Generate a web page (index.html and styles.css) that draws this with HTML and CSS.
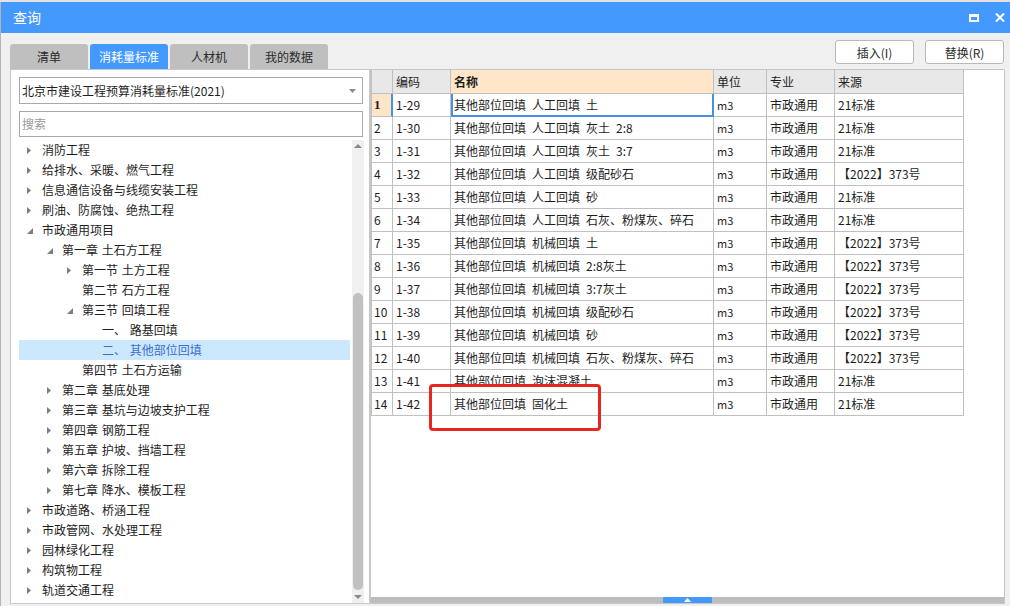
FILE: index.html
```html
<!DOCTYPE html>
<html lang="zh">
<head>
<meta charset="utf-8">
<title>查询</title>
<link rel="stylesheet" href="styles.css">
</head>
<body>
<div class="topstrip"></div>
<div class="window">
  <div class="titlebar">
    <span class="title">查询</span>
    <div class="winbtns">
      <svg class="ico" width="10" height="8" viewBox="0 0 10 8"><path d="M0 0H10V8H0Z M2 3H8V6H2Z" fill="#fff" fill-rule="evenodd"/></svg>
      <svg class="ico" width="10" height="9" viewBox="0 0 10 9"><path d="M1 0.5L9 8.5M9 0.5L1 8.5" stroke="#fff" stroke-width="2"/></svg>
    </div>
  </div>

  <div class="toolbar">
    <div class="tabs">
      <div class="tab">清单</div>
      <div class="tab active">消耗量标准</div>
      <div class="tab">人材机</div>
      <div class="tab">我的数据</div>
    </div>
    <div class="actions">
      <button class="btn">插入(I)</button>
      <button class="btn">替换(R)</button>
    </div>
  </div>

  <div class="main">
    <div class="leftpanel">
      <div class="select">
        <span>北京市建设工程预算消耗量标准(2021)</span>
        <svg width="7" height="4" viewBox="0 0 7 4"><polygon points="0,0 7,0 3.5,4" fill="#8a8a8a"/></svg>
      </div>
      <div class="search">搜索</div>
      <div class="treewrap">
        <ul class="tree">
          <li class="lv0"><span class="arr"><svg width="4" height="7" viewBox="0 0 4 7"><polygon points="0,0 4,3.5 0,7" fill="#7d7d7d"/></svg></span>消防工程</li>
          <li class="lv0"><span class="arr"><svg width="4" height="7" viewBox="0 0 4 7"><polygon points="0,0 4,3.5 0,7" fill="#7d7d7d"/></svg></span>给排水、采暖、燃气工程</li>
          <li class="lv0"><span class="arr"><svg width="4" height="7" viewBox="0 0 4 7"><polygon points="0,0 4,3.5 0,7" fill="#7d7d7d"/></svg></span>信息通信设备与线缆安装工程</li>
          <li class="lv0"><span class="arr"><svg width="4" height="7" viewBox="0 0 4 7"><polygon points="0,0 4,3.5 0,7" fill="#7d7d7d"/></svg></span>刷油、防腐蚀、绝热工程</li>
          <li class="lv0"><span class="arr"><svg class="down" width="6" height="6" viewBox="0 0 6 6"><polygon points="6,0 6,6 0,6" fill="#7d7d7d"/></svg></span>市政通用项目</li>
          <li class="lv1"><span class="arr"><svg class="down" width="6" height="6" viewBox="0 0 6 6"><polygon points="6,0 6,6 0,6" fill="#7d7d7d"/></svg></span>第一章 土石方工程</li>
          <li class="lv2"><span class="arr"><svg width="4" height="7" viewBox="0 0 4 7"><polygon points="0,0 4,3.5 0,7" fill="#7d7d7d"/></svg></span>第一节 土方工程</li>
          <li class="lv2"><span class="arr"></span>第二节 石方工程</li>
          <li class="lv2"><span class="arr"><svg class="down" width="6" height="6" viewBox="0 0 6 6"><polygon points="6,0 6,6 0,6" fill="#7d7d7d"/></svg></span>第三节 回填工程</li>
          <li class="lv3"><span class="arr"></span>一、&nbsp;路基回填</li>
          <li class="lv3 sel"><span class="arr"></span>二、&nbsp;其他部位回填</li>
          <li class="lv2"><span class="arr"></span>第四节 土石方运输</li>
          <li class="lv1"><span class="arr"><svg width="4" height="7" viewBox="0 0 4 7"><polygon points="0,0 4,3.5 0,7" fill="#7d7d7d"/></svg></span>第二章 基底处理</li>
          <li class="lv1"><span class="arr"><svg width="4" height="7" viewBox="0 0 4 7"><polygon points="0,0 4,3.5 0,7" fill="#7d7d7d"/></svg></span>第三章 基坑与边坡支护工程</li>
          <li class="lv1"><span class="arr"><svg width="4" height="7" viewBox="0 0 4 7"><polygon points="0,0 4,3.5 0,7" fill="#7d7d7d"/></svg></span>第四章 钢筋工程</li>
          <li class="lv1"><span class="arr"><svg width="4" height="7" viewBox="0 0 4 7"><polygon points="0,0 4,3.5 0,7" fill="#7d7d7d"/></svg></span>第五章 护坡、挡墙工程</li>
          <li class="lv1"><span class="arr"><svg width="4" height="7" viewBox="0 0 4 7"><polygon points="0,0 4,3.5 0,7" fill="#7d7d7d"/></svg></span>第六章 拆除工程</li>
          <li class="lv1"><span class="arr"><svg width="4" height="7" viewBox="0 0 4 7"><polygon points="0,0 4,3.5 0,7" fill="#7d7d7d"/></svg></span>第七章 降水、模板工程</li>
          <li class="lv0"><span class="arr"><svg width="4" height="7" viewBox="0 0 4 7"><polygon points="0,0 4,3.5 0,7" fill="#7d7d7d"/></svg></span>市政道路、桥涵工程</li>
          <li class="lv0"><span class="arr"><svg width="4" height="7" viewBox="0 0 4 7"><polygon points="0,0 4,3.5 0,7" fill="#7d7d7d"/></svg></span>市政管网、水处理工程</li>
          <li class="lv0"><span class="arr"><svg width="4" height="7" viewBox="0 0 4 7"><polygon points="0,0 4,3.5 0,7" fill="#7d7d7d"/></svg></span>园林绿化工程</li>
          <li class="lv0"><span class="arr"><svg width="4" height="7" viewBox="0 0 4 7"><polygon points="0,0 4,3.5 0,7" fill="#7d7d7d"/></svg></span>构筑物工程</li>
          <li class="lv0"><span class="arr"><svg width="4" height="7" viewBox="0 0 4 7"><polygon points="0,0 4,3.5 0,7" fill="#7d7d7d"/></svg></span>轨道交通工程</li>
        </ul>
        <div class="vscroll">
          <div class="sb-btn"><svg width="8" height="4" viewBox="0 0 8 4"><polygon points="0,4 8,4 4,0" fill="#8a8a8a"/></svg></div>
          <div class="sb-track"><div class="sb-thumb"></div></div>
          <div class="sb-btn"><svg width="8" height="4" viewBox="0 0 8 4"><polygon points="0,0 8,0 4,4" fill="#8a8a8a"/></svg></div>
        </div>
      </div>
    </div>

    <div class="rightpanel">
      <div class="tablearea">
        <div class="grid">
          <div class="row head">
            <div class="c rn"></div><div class="c">编码</div><div class="c name bold">名称</div><div class="c">单位</div><div class="c">专业</div><div class="c">来源</div>
          </div>
          <div class="row cur">
            <div class="c rn">1</div><div class="c">1-29</div><div class="c focus">其他部位回填&ensp;人工回填&ensp;土</div><div class="c mono">m3</div><div class="c">市政通用</div><div class="c">21标准</div>
          </div>
          <div class="row">
            <div class="c rn">2</div><div class="c">1-30</div><div class="c">其他部位回填&ensp;人工回填&ensp;灰土&ensp;2:8</div><div class="c mono">m3</div><div class="c">市政通用</div><div class="c">21标准</div>
          </div>
          <div class="row">
            <div class="c rn">3</div><div class="c">1-31</div><div class="c">其他部位回填&ensp;人工回填&ensp;灰土&ensp;3:7</div><div class="c mono">m3</div><div class="c">市政通用</div><div class="c">21标准</div>
          </div>
          <div class="row">
            <div class="c rn">4</div><div class="c">1-32</div><div class="c">其他部位回填&ensp;人工回填&ensp;级配砂石</div><div class="c mono">m3</div><div class="c">市政通用</div><div class="c">【2022】373号</div>
          </div>
          <div class="row">
            <div class="c rn">5</div><div class="c">1-33</div><div class="c">其他部位回填&ensp;人工回填&ensp;砂</div><div class="c mono">m3</div><div class="c">市政通用</div><div class="c">21标准</div>
          </div>
          <div class="row">
            <div class="c rn">6</div><div class="c">1-34</div><div class="c">其他部位回填&ensp;人工回填&ensp;石灰、粉煤灰、碎石</div><div class="c mono">m3</div><div class="c">市政通用</div><div class="c">21标准</div>
          </div>
          <div class="row">
            <div class="c rn">7</div><div class="c">1-35</div><div class="c">其他部位回填&ensp;机械回填&ensp;土</div><div class="c mono">m3</div><div class="c">市政通用</div><div class="c">【2022】373号</div>
          </div>
          <div class="row">
            <div class="c rn">8</div><div class="c">1-36</div><div class="c">其他部位回填&ensp;机械回填&ensp;2:8灰土</div><div class="c mono">m3</div><div class="c">市政通用</div><div class="c">【2022】373号</div>
          </div>
          <div class="row">
            <div class="c rn">9</div><div class="c">1-37</div><div class="c">其他部位回填&ensp;机械回填&ensp;3:7灰土</div><div class="c mono">m3</div><div class="c">市政通用</div><div class="c">【2022】373号</div>
          </div>
          <div class="row">
            <div class="c rn">10</div><div class="c">1-38</div><div class="c">其他部位回填&ensp;机械回填&ensp;级配砂石</div><div class="c mono">m3</div><div class="c">市政通用</div><div class="c">【2022】373号</div>
          </div>
          <div class="row">
            <div class="c rn">11</div><div class="c">1-39</div><div class="c">其他部位回填&ensp;机械回填&ensp;砂</div><div class="c mono">m3</div><div class="c">市政通用</div><div class="c">【2022】373号</div>
          </div>
          <div class="row">
            <div class="c rn">12</div><div class="c">1-40</div><div class="c">其他部位回填&ensp;机械回填&ensp;石灰、粉煤灰、碎石</div><div class="c mono">m3</div><div class="c">市政通用</div><div class="c">【2022】373号</div>
          </div>
          <div class="row">
            <div class="c rn">13</div><div class="c">1-41</div><div class="c">其他部位回填&ensp;泡沫混凝土</div><div class="c mono">m3</div><div class="c">市政通用</div><div class="c">21标准</div>
          </div>
          <div class="row">
            <div class="c rn">14</div><div class="c">1-42</div><div class="c">其他部位回填&ensp;固化土</div><div class="c mono">m3</div><div class="c">市政通用</div><div class="c">21标准</div>
          </div>
        </div>
      </div>
      <div class="hscroll"><div class="hthumb"><svg width="7" height="4" viewBox="0 0 7 4"><polygon points="0,4 7,4 3.5,0" fill="#fff"/></svg></div></div>
      <div class="mark"></div>
    </div>
  </div>
</div>
</body>
</html>
```

FILE: styles.css
```css
* { box-sizing: border-box; margin: 0; padding: 0; }
html, body { width: 1010px; height: 606px; overflow: hidden; }
body {
  font-family: "Noto Sans CJK SC", "Microsoft YaHei", sans-serif;
  font-size: 12px;
  color: #1e1e1e;
  background: #f0f0f0;
}

.topstrip { height: 2px; background: #e2e2e2; }

.window {
  height: 604px;
  border-left: 1px solid #b4b4b4;
  background: #f0f0f0;
  display: flex;
  flex-direction: column;
}

.titlebar {
  height: 31px;
  flex: none;
  background: #4499ff;
  color: #fff;
  display: flex;
  align-items: center;
  justify-content: space-between;
  padding: 0 5px 0 12px;
}
.title { font-size: 14px; line-height: 31px; }
.winbtns { display: flex; align-items: center; gap: 16px; }
.ico { display: block; }

.toolbar {
  height: 36px;
  flex: none;
  display: flex;
  justify-content: space-between;
  padding: 0 6px 0 9px;
}
.tabs { display: flex; gap: 2px; align-self: flex-end; }
.tab {
  width: 78px;
  height: 25px;
  line-height: 25px;
  text-align: center;
  background: #bfbfbf;
  border-radius: 3px 3px 0 0;
  color: #2a2a2a;
  font-size: 12px;
}
.tab.active { background: #4499ff; color: #fff; }
.actions { display: flex; gap: 11px; padding-top: 7px; }
.btn {
  width: 79px;
  height: 24px;
  background: #fff;
  border: 1px solid #b9b9b9;
  border-radius: 3px;
  font-family: inherit;
  font-size: 12px;
  color: #2a2a2a;
}

.main {
  flex: 1;
  display: flex;
  padding: 0 5px 2px 9px;
  min-height: 0;
}

.leftpanel {
  width: 360px;
  flex: none;
  background: #fff;
  border: 1px solid #c8c8c8;
  padding: 7px 5px 0 8px;
  display: flex;
  flex-direction: column;
}
.select {
  width: 344px;
  height: 27px;
  border: 1px solid #a9a9a9;
  display: flex;
  align-items: center;
  justify-content: space-between;
  padding: 0 6px 0 2px;
  font-size: 12px;
  color: #1e1e1e;
}
.search {
  width: 344px;
  height: 26px;
  margin-top: 7px;
  border: 1px solid #a9a9a9;
  padding-left: 2px;
  line-height: 24px;
  color: #9a9a9a;
}
.treewrap {
  flex: 1;
  margin-top: 3px;
  display: flex;
  min-height: 0;
}
.tree {
  list-style: none;
  width: 331px;
  overflow: hidden;
}
.tree li {
  height: 20px;
  line-height: 20px;
  display: flex;
  align-items: center;
  white-space: nowrap;
  color: #1e1e1e;
  word-spacing: 1px;
}
.tree li.lv0 { padding-left: 8px; }
.tree li.lv1 { padding-left: 28px; }
.tree li.lv2 { padding-left: 48px; }
.tree li.lv3 { padding-left: 68px; }
.tree li.sel { background: #cce8ff; color: #3a6fd0; }
.arr { width: 15px; flex: none; display: flex; align-items: center; }
.arr svg { display: block; }
.arr svg.down { margin-top: 1px; }

.vscroll {
  width: 12px;
  margin-left: 2px;
  background: #f0f0f0;
  display: flex;
  flex-direction: column;
}
.sb-btn { height: 12px; display: flex; align-items: center; justify-content: center; }
.sb-track { flex: 1; padding-top: 141px; display: flex; justify-content: center; }
.sb-thumb { width: 10px; height: 297px; background: #c1c1c1; border-radius: 5px; }

.rightpanel {
  flex: 1;
  position: relative;
  background: #fff;
  border: 1px solid #c6c6c6;
  display: flex;
  flex-direction: column;
}
.tablearea { flex: 1; overflow: hidden; }
.grid { width: 593px; border-left: 1px solid #c0c0c0; }
.row {
  display: grid;
  grid-template-columns: 21px 58px 263px 53px 68px 129px;
  height: 23px;
}
.row.head { height: 24px; background: #e8e8e8; }
.c {
  border-right: 1px solid #c0c0c0;
  border-bottom: 1px solid #c0c0c0;
  padding-left: 3px;
  line-height: 22px;
  white-space: nowrap;
  overflow: hidden;
}
.head .c { line-height: 23px; }
.head .name { background: #ffe6c9; }
.bold { font-weight: bold; }
.c.rn { padding-left: 2px; }
.cur .rn {
  background: #fde5c7;
  font-family: "Liberation Serif", serif;
  font-weight: bold;
  font-size: 13px;
  border-right-color: #4a90e2;
  border-right-width: 2px;
}
.c.focus {
  border-right: 2px solid #4a90e2;
  border-bottom: 2px solid #4a90e2;
  box-shadow: inset 2px 0 0 #4a90e2;
}
.mono { font-size: 11px; }

.hscroll {
  height: 6px;
  flex: none;
  background: #bdbdbd;
  display: flex;
}
.hthumb {
  margin-left: 292px;
  width: 49px;
  background: #4499ff;
  display: flex;
  align-items: center;
  justify-content: center;
}
.hthumb svg { display: block; }

.mark {
  position: absolute;
  left: 58px;
  top: 314px;
  width: 172px;
  height: 47px;
  border: 3px solid #e6261f;
  border-radius: 4px;
}
```
